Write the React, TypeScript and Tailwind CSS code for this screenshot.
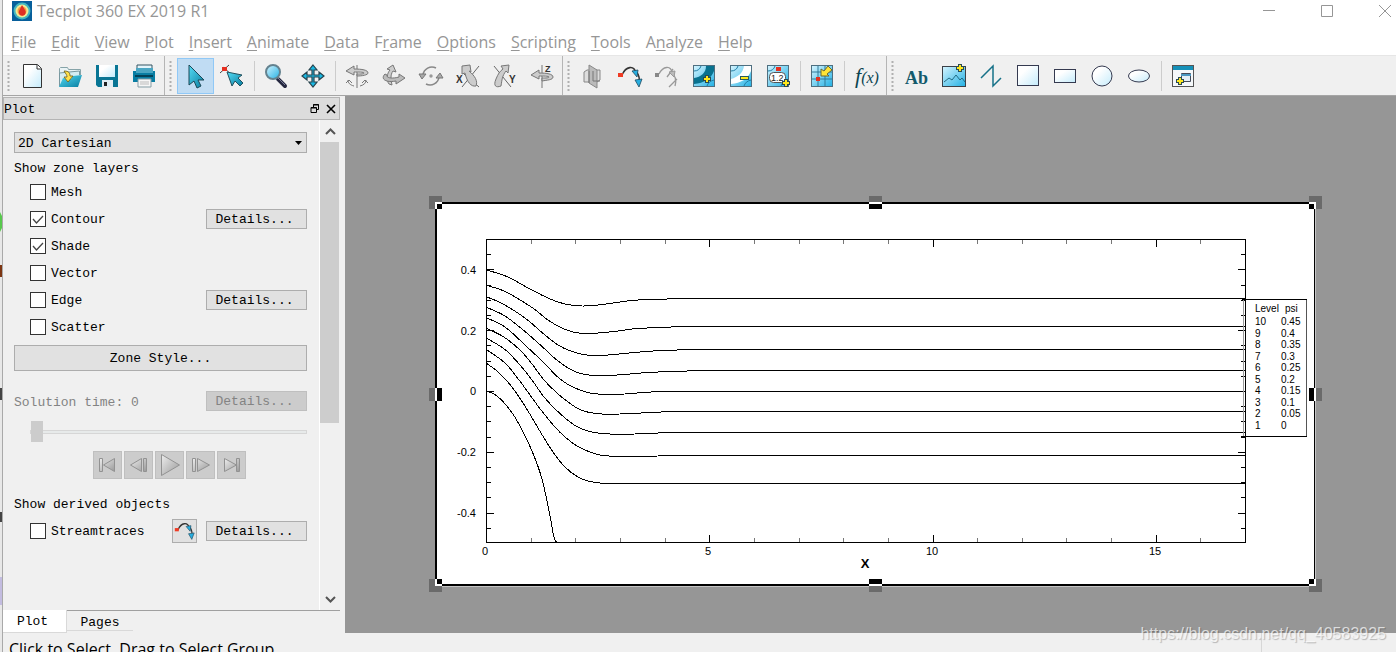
import React, { useState } from 'react';

type IconProps = { children: React.ReactNode };

const Icon = ({ children }: IconProps) => (
  <svg width="26" height="26" viewBox="0 0 26 26" fill="none" aria-hidden="true">
    {children}
  </svg>
);

const MENUS = [
  { name: 'File', key: 0 },
  { name: 'Edit', key: 0 },
  { name: 'View', key: 0 },
  { name: 'Plot', key: 0 },
  { name: 'Insert', key: 0 },
  { name: 'Animate', key: 0 },
  { name: 'Data', key: 0 },
  { name: 'Frame', key: 1 },
  { name: 'Options', key: 0 },
  { name: 'Scripting', key: 0 },
  { name: 'Tools', key: 0 },
  { name: 'Analyze', key: 1 },
  { name: 'Help', key: 0 },
];

const StreamShape = () => (
  <>
    <path d="M5 12C9 3 17 2 19 10" stroke="#333" strokeWidth="1.6" />
    <path d="M19 8C22 12 23 16 22 20" stroke="#333" strokeWidth="1.4" />
    <rect x="1" y="10" width="5" height="4" fill="#ef3b24" />
    <path d="M15 8l6-1-1 7z" fill="#27aee0" stroke="#1f4a60" strokeWidth=".8" />
    <path d="M18 17l7-1-3 8z" fill="#27aee0" stroke="#1f4a60" strokeWidth=".8" />
  </>
);

const Plus = ({ x, y }: { x: number; y: number }) => (
  <path
    d={`M${x + 2} ${y}h3v2h2v3h-2v2h-3v-2h-2v-3h2z`}
    fill="#ffe81c"
    stroke="#2a4a52"
    shapeRendering="crispEdges"
  />
);

const ContourTile = () => (
  <>
    <rect x="2.500" y="2.500" width="21" height="21" fill="url(#sky)" stroke="#4e6f80" />
    <path d="M3 8C7 8 9 6 10 3M16 23c1-3 3-5 7-6" stroke="#1f7ea5" />
  </>
);

const icons: Record<string, React.ReactNode> = {
  'New': (
    <>
      <path d="M3.500 1.500h14l4 4v19h-18z" fill="url(#paper)" stroke="#333" />
      <path d="M17 2v4h4.500" fill="#fff" stroke="#333" />
    </>
  ),
  'Open': (
    <>
      <path d="M2.500 22V5.500l1-1h7l1 2h12V12" fill="#e9f3f5" stroke="#86a3a8" />
      <path d="M2.500 23.500V10l20-2v4" fill="#d5edf2" stroke="#7898a0" />
      <path d="M2 24l4-9 8 1 2-3 9-1-4 12z" fill="url(#sea)" />
      <path d="M7 8c5 0 6 2 6 5h3l-5 6-4-5h3c0-2-1-3-3-6z" fill="#ffe04a" stroke="#695c18" strokeWidth=".8" />
    </>
  ),
  'Save': (
    <>
      <path d="M2 2h22v22H4l-2-2z" fill="#087594" />
      <rect x="5" y="2" width="16" height="12" fill="url(#paper)" />
      <path d="M8 17h11v7H8z" fill="#e2eef4" />
      <rect x="10" y="19" width="3" height="4" fill="#222" />
    </>
  ),
  'Print': (
    <>
      <path d="M6 2h15v9H6z" fill="#e3f4fb" stroke="#345563" />
      <path d="M2 8h22v11H2z" fill="#087da3" />
      <path d="M5 5h17v5H5z" fill="#4aa6c3" />
      <path d="M4 13h18" stroke="#044258" strokeWidth="2" />
      <path d="M7 16h13v8H7z" fill="#f6f6f6" stroke="#859da5" />
      <path d="M9 19h9M9 21h9" stroke="#bbb" />
    </>
  ),
  'Select': <path d="M7 2v20l5-4 3 7 4-2-3-6h6z" fill="url(#sea)" stroke="#1c4857" />,
  'Adjust': (
    <>
      <path d="M1 10l9-8M4 4l10 9" stroke="#444" />
      <rect x="3" y="4" width="5" height="4" fill="#e52f20" />
      <path d="M8 9l5 14 3-5 5 5 3-3-5-5 4-3z" fill="url(#sea)" stroke="#22505d" />
    </>
  ),
  'Zoom': (
    <>
      <path d="M15 16l7 7" stroke="#252840" strokeWidth="4" strokeLinecap="round" />
      <path d="M15 15l7 7" stroke="#777b96" strokeWidth="1" />
      <circle cx="10" cy="9" r="7" fill="url(#sky)" stroke="#64828f" strokeWidth="2" />
    </>
  ),
  'Translate': (
    <path
      d="M13 2l4 5h-3v5h5V9l5 4-5 4v-3h-5v5h3l-4 5-4-5h3v-5H7v3l-5-4 5-4v3h5V7H9z"
      fill="#18b8e3"
      stroke="#28434d"
      strokeWidth="1.200"
    />
  ),
  'Rotate Spherical': (
    <>
      <path d="M13 2v23M4 17c0 3 2 5 6 6M22 17c0 3-2 5-6 6M2 20l3-3 3 3M18 20l3-3 3 3" stroke="#777" />
      <path d="M2 8l8-5v3c8 0 14 1 14 4 0 2-6 3-11 3v-2c4 0 7 0 7-1s-6-1-10-1v3z" fill="#ccc" stroke="#777" />
    </>
  ),
  'Rotate Rollerball': (
    <>
      <path d="M8 21C5 17 6 10 9 7L6 6l6-4 3 7-3-1c-3 4-2 9-1 14z" fill="#ccc" stroke="#777" />
      <path d="M4 11c-5 5 1 9 11 7v3l9-6-6-4v3c-7 2-13 1-12-2z" fill="#bbb" stroke="#777" />
    </>
  ),
  'Rotate Twist': (
    <>
      <path d="M5 12a9 9 0 0 1 13-7M21 14a9 9 0 0 1-13 7" stroke="#888" strokeWidth="1.600" />
      <path d="M1 11h7l-4 5zM25 15h-7l4-5z" fill="#aaa" stroke="#777" />
      <circle cx="13" cy="13" r="1.700" fill="#999" />
    </>
  ),
  'Rotate X': (
    <>
      <path d="M7 24L24 3M9 11l15 13" stroke="#666" />
      <path d="M7 3l8-1 1 7-2-1c6 5 9 10 7 15-5 1-9-4-11-13l-3 1z" fill="#ccc" stroke="#777" />
      <text x="1" y="20" fill="#333" fontSize="10" fontWeight="700" fontFamily="Liberation Sans">X</text>
    </>
  ),
  'Rotate Y': (
    <>
      <path d="M2 3l17 21" stroke="#666" />
      <path d="M9 3l8-1-1 8-2-2c-4 5-4 9-5 15-5 2-8 0-5-7 2-5 4-8 7-10z" fill="#ccc" stroke="#777" />
      <text x="17" y="20" fill="#333" fontSize="10" fontWeight="700" fontFamily="Liberation Sans">Y</text>
    </>
  ),
  'Rotate Z': (
    <>
      <path d="M13 2v23" stroke="#777" />
      <path d="M2 12l8-5v3c8 0 14 1 14 4 0 3-6 3-11 4v-3c4 0 7 0 7-1s-6-1-10-1v3z" fill="#ccc" stroke="#777" />
      <text x="16" y="9" fill="#333" fontSize="9" fontWeight="700" fontFamily="Liberation Sans">Z</text>
    </>
  ),
  'Slice': (
    <>
      <path d="M4 9l3-2h13v10l-3 2H4z" fill="#ddd" stroke="#888" />
      <path d="M9 2l8 5v18l-8-5z" fill="#bbb" stroke="#888" />
      <path d="M9 8v12M13 8v10h7" stroke="#777" />
    </>
  ),
  'Streamtrace': <StreamShape />,
  'Streamtrace Rake': (
    <>
      <path d="M5 11C9 3 17 2 18 10M17 9c4 3 6 7 4 14M15 24l8-8M13 14l6-8" stroke="#999" strokeWidth="1.300" />
      <rect x="1" y="10" width="4" height="4" fill="#888" />
      <path d="M15 9l6-1-1 6z" fill="#bbb" stroke="#999" />
    </>
  ),
  'Add Contour': (
    <>
      <ContourTile />
      <path d="M15 3h8v5C20 16 13 20 3 21v-6C10 14 15 10 15 3z" fill="#08728f" />
      <Plus x={12} y={12} />
    </>
  ),
  'Remove Contour': (
    <>
      <ContourTile />
      <path d="M16 3h7v5C20 16 13 20 3 21v-5C10 14 15 10 16 3z" fill="#fff" />
      <rect x="12.500" y="13.500" width="8" height="3" fill="#ffe81c" stroke="#2a5a60" />
    </>
  ),
  'Contour Label': (
    <>
      <ContourTile />
      <rect x="11" y="4" width="5" height="4" fill="#e53020" />
      <rect x="4.500" y="9.500" width="16" height="10" rx="4" fill="#fff" stroke="#555" />
      <text x="6" y="18" fill="#222" fontSize="9" fontFamily="Liberation Sans">1.2</text>
      <Plus x={17} y={16} />
    </>
  ),
  'Probe': (
    <>
      <rect x="2.500" y="2.500" width="21" height="21" fill="url(#sky)" stroke="#4e6f80" />
      <path d="M9 3v20M16 3v20M3 9h20M3 16h20" stroke="#307b99" />
      <rect x="7" y="14" width="4" height="4" fill="#e53020" />
      <path d="M12 13V6l3 2 4-5 4 4-5 4 2 2z" fill="#ffe435" stroke="#6b6830" />
    </>
  ),
  'Function': (
    <text x="2" y="20" fill="#0b4450" fontSize="22" fontStyle="italic" fontFamily="Liberation Serif">
      f<tspan fontSize="16">(x)</tspan>
    </text>
  ),
  'Text': (
    <text x="1" y="21" fill="#135a6c" fontSize="18" fontWeight="700" fontFamily="Liberation Serif">
      Ab
    </text>
  ),
  'Image': (
    <>
      <rect x="1.500" y="3.500" width="23" height="20" fill="url(#sky)" stroke="#3c4148" />
      <path d="M3 19l5-4 3 2 4-5 4 5 2-2 3 4" stroke="#226b84" />
      <Plus x={15} y={1} />
    </>
  ),
  'Polyline': <path d="M3 15L15 3v20l8-8" stroke="#167188" strokeWidth="1.500" />,
  'Square': <rect x="2.500" y="2.500" width="21" height="20" fill="url(#paper)" stroke="#353a50" />,
  'Rectangle': <rect x="2.500" y="6.500" width="21" height="13" fill="url(#paper)" stroke="#353a50" />,
  'Circle': <circle cx="13" cy="13" r="10" fill="url(#paper)" stroke="#353a50" />,
  'Ellipse': <ellipse cx="13" cy="13" rx="10.500" ry="6" fill="url(#paper)" stroke="#353a50" />,
  'Frame': (
    <>
      <rect x="2.500" y="2.500" width="21" height="21" fill="#f5f8fa" stroke="#555" />
      <path d="M3 3h20v4H3z" fill="#1590b8" />
      <path d="M11.500 10.500h9v8h-9z" fill="#e3eef5" stroke="#454a58" />
      <path d="M11 11h10v2H11z" fill="#4a97c0" />
      <Plus x={6} y={14} />
    </>
  ),
};

// '|' is a thin separator inside a toolbar
const TOOLBARS = [
  ['New', 'Open', 'Save', 'Print'],
  ['Select', 'Adjust', '|', 'Zoom', 'Translate', '|', 'Rotate Spherical', 'Rotate Rollerball', 'Rotate Twist', 'Rotate X', 'Rotate Y', 'Rotate Z'],
  ['Slice', 'Streamtrace', 'Streamtrace Rake', 'Add Contour', 'Remove Contour', 'Contour Label', '|', 'Probe', '|', 'Function'],
  ['Text', 'Image', 'Polyline', 'Square', 'Rectangle', 'Circle', 'Ellipse', '|', 'Frame'],
];

const LAYERS = [
  { name: 'Mesh', on: false, details: false },
  { name: 'Contour', on: true, details: true },
  { name: 'Shade', on: true, details: false },
  { name: 'Vector', on: false, details: false },
  { name: 'Edge', on: false, details: true },
  { name: 'Scatter', on: false, details: false },
];

const PLAYER = [
  { name: 'First frame', d: 'M1.500 3.500h3v13h-3zM16.500 3.500v13l-11-6.500z' },
  { name: 'Step back', d: 'M12.500 3.500v13l-11-6.500zM14.500 3.500h3v13h-3z' },
  { name: 'Play', d: 'M1.500 -.500v21l18-10.500z' },
  { name: 'Step forward', d: 'M1.500 3.500h3v13h-3zM6.500 3.500v13l12-6.500z' },
  { name: 'Last frame', d: 'M2.500 3.500v13l12-6.500zM14.500 3.500h3v13h-3z' },
];

const LEVELS = [
  ['10', '0.45'],
  ['9', '0.4'],
  ['8', '0.35'],
  ['7', '0.3'],
  ['6', '0.25'],
  ['5', '0.2'],
  ['4', '0.15'],
  ['3', '0.1'],
  ['2', '0.05'],
  ['1', '0'],
];

// Contour lines in plot units; the last point runs out to the right axis
const CONTOURS: number[][][] = [
  [[487, 270], [508, 277], [528, 288], [550, 299], [565, 304], [582, 306], [598, 305], [620, 302], [638, 300], [685, 298.5], [1245, 298.5]],
  [[487, 285.5], [505, 291.5], [532, 307.5], [548, 320], [565, 329.5], [582, 333.5], [598, 333], [618, 331], [638, 328.5], [685, 326.5], [1245, 326.5]],
  [[487, 297], [503, 304], [525, 318], [542, 332.5], [558, 345], [572, 351.5], [587, 355], [608, 355], [632, 352.7], [658, 350.7], [695, 349.5], [1245, 349.5]],
  [[487, 307.5], [505, 316], [525, 331.5], [542, 346.5], [558, 361], [575, 371.5], [592, 375.3], [617, 375], [645, 372.7], [665, 371.7], [705, 370.5], [1245, 370.5]],
  [[487, 318], [505, 327], [525, 345], [542, 361], [560, 379], [575, 388], [594, 393.7], [625, 394], [645, 392.3], [668, 391.5], [1245, 391.5]],
  [[487, 328.7], [503, 336.5], [520, 350], [532, 364], [544, 380], [557, 393], [568, 402], [581, 410], [597, 413.7], [620, 414], [650, 412.5], [673, 411.5], [1245, 411.5]],
  [[487, 338.5], [505, 349.5], [520, 365], [532, 380], [544, 397], [558, 411.7], [575, 425.5], [592, 432], [610, 434], [635, 434], [668, 432.5], [1245, 432.5]],
  [[487, 350], [505, 363], [519, 380], [530, 395], [541, 410], [555, 427], [565, 437], [577, 446], [590, 452], [604, 455.7], [630, 456.3], [658, 456], [661, 455.5], [1245, 455.5]],
  [[487, 363.7], [497, 371], [506, 380], [515, 391], [528, 411], [541, 433], [553, 452], [565, 467], [578, 477], [590, 481.5], [604, 483.5], [1245, 483.5]],
  [[487, 391], [497, 396], [510, 410], [520, 426], [532, 451], [542, 479], [550, 516], [553, 533], [555, 540], [557, 542.5]],
];

const smooth = (pts: number[][]) => {
  let d = `M${pts[0][0]} ${pts[0][1]}`;
  for (let i = 0; i < pts.length - 1; i++) {
    const [x1, y1] = pts[i];
    const [x2, y2] = pts[i + 1];
    if (x2 === 1245) {
      d += `H${x2}`;
      continue;
    }
    const [x0, y0] = pts[i - 1] ?? pts[i];
    // the long flat tail must not bend the segment before it
    const [x3, y3] = pts[i + 2] && pts[i + 2][0] !== 1245 ? pts[i + 2] : pts[i + 1];
    d += `C${x1 + (x2 - x0) / 6} ${y1 + (y2 - y0) / 6} ${x2 - (x3 - x1) / 6} ${y2 - (y3 - y1) / 6} ${x2} ${y2}`;
  }
  return d;
};

const range = (from: number, to: number) => Array.from({ length: to - from + 1 }, (_, i) => from + i);

const Corner = ({ x, y, right, bottom }: { x: number; y: number; right?: boolean; bottom?: boolean }) => (
  <g>
    <rect x={x} y={y} width="13" height="13" fill="#6a6a6a" />
    <rect x={right ? x : x + 6} y={bottom ? y : y + 6} width="7" height="7" fill="#fff" />
    <rect x={right ? x : x + 8} y={bottom ? y : y + 8} width="5" height="5" fill="#000" />
  </g>
);

function PlotFrame() {
  return (
    <svg viewBox="429 196 893 396" className="block w-full" role="img" aria-label="psi contour plot">
      <g shapeRendering="crispEdges">
        <rect x="436" y="203" width="880" height="384" fill="#c4c4c4" />
        <rect x="435" y="202" width="880" height="384" fill="#000" />
        <rect x="437" y="204" width="877" height="380" fill="#fff" />
        <rect x="486.500" y="239.500" width="759" height="303" fill="none" stroke="#000" />
        {range(1, 16).map(i => {
          const x = Math.round(486 + i * 44.65) + 0.5;
          const len = i % 5 === 0 ? 7 : 4;
          return (
            <path key={i} d={`M${x} 240v${len}M${x} 542v-${len}`} stroke={i % 5 === 0 ? '#000' : '#777'} />
          );
        })}
        {range(-9, 9).map(i => {
          const y = Math.round(391 - i * 15.2) + 0.5;
          const len = i % 4 === 0 ? 7 : 4;
          return <path key={i} d={`M487 ${y}h${len}M1245 ${y}h-${len}`} stroke="#000" />;
        })}
        {CONTOURS.map((pts, i) => (
          <path key={i} d={smooth(pts)} fill="none" stroke="#000" />
        ))}
        <path d="M1245.500 299.500h61v137h-61" fill="#fff" />
        <path d="M1242 299.500h64.500M1241 436.500h66" stroke="#000" />
        <path d="M1306.500 436V300" stroke="#555" />
        <path d="M1243.500 300v136" stroke="#999" />
        <path d="M1245.500 240v302" stroke="#000" />
        <Corner x={429} y={196} />
        <Corner x={1309} y={196} right />
        <Corner x={429} y={579} bottom />
        <Corner x={1309} y={579} right bottom />
        <path d="M869 196h13v6h-13zM869 586h13v6h-13zM429 388h6v13h-6zM1316 388h6v13h-6z" fill="#6a6a6a" />
        <path d="M869 202h13v2h-13zM869 584h13v2h-13zM435 388h2v13h-2zM1314 388h2v13h-2z" fill="#fff" />
        <path d="M869 204h13v5h-13zM869 579h13v5h-13zM437 388h5v13h-5zM1309 388h5v13h-5z" fill="#000" />
      </g>
      <g fontFamily="Liberation Sans, Arial, sans-serif" fontSize="11" fill="#000">
        {['0.4', '0.2', '0', '-0.2', '-0.4'].map((t, i) => (
          <text key={t} x="476" y={274 + Math.round(i * 60.7)} textAnchor="end">{t}</text>
        ))}
        {['0', '5', '10', '15'].map((t, i) => (
          <text key={t} x={Math.round(485 + i * 223.3)} y="555" textAnchor="middle">{t}</text>
        ))}
        <text x="865" y="568" textAnchor="middle" fontSize="13" fontWeight="700">X</text>
        <g fontSize="10">
          <text x="1255" y="312">Level</text>
          <text x="1285" y="312">psi</text>
          {LEVELS.map(([level, psi], i) => (
            <React.Fragment key={level}>
              <text x="1255" y={Math.round(325 + i * 11.5)}>{level}</text>
              <text x="1281" y={Math.round(325 + i * 11.5)}>{psi}</text>
            </React.Fragment>
          ))}
        </g>
      </g>
    </svg>
  );
}

const DetailsButton = ({ disabled = false }: { disabled?: boolean }) => (
  <button
    type="button"
    disabled={disabled}
    className="h-5 w-[101px] border border-[#adadad] bg-[#e1e1e1] pr-1 pt-px leading-[18px] disabled:border-[#bfbfbf] disabled:bg-[#cccccc] disabled:text-[#838383]"
  >
    Details...
  </button>
);

const LayerCheck = ({ name, on }: { name: string; on: boolean }) => {
  const [checked, setChecked] = useState(on);
  return (
    <label className="flex items-center gap-[5px]">
      <span className="grid">
        <input
          type="checkbox"
          checked={checked}
          onChange={e => setChecked(e.target.checked)}
          className="col-start-1 row-start-1 h-4 w-4 appearance-none border border-[#333] bg-white"
        />
        {checked && (
          <svg className="pointer-events-none col-start-1 row-start-1 h-4 w-4" viewBox="0 0 16 16" fill="none">
            <path d="M3 8l3.500 4L13 5" stroke="#444" strokeWidth="1.300" />
          </svg>
        )}
      </span>
      <span className="pt-0.5">{name}</span>
    </label>
  );
};

function PlotSidebar() {
  return (
    <aside className="flex w-[342px] shrink-0 flex-col pr-[5px] pt-px font-['Liberation_Mono','Noto_Sans_CJK_SC',monospace] text-[13px] text-black">
      <div className="flex h-[23px] shrink-0 items-center border border-[#b4b4b4] bg-[#dcdcdc]">
        <h2 className="flex-1 pt-0.5">Plot</h2>
        <button type="button" aria-label="Float" className="flex h-4 w-4 items-center justify-center">
          <svg width="10" height="10" viewBox="0 0 10 10" fill="none" stroke="#000">
            <path d="M3.500 3V.500h5v5H7M3 1h6M1 4h5.500" />
            <path d="M1 3.500h5.500v5H1z" />
          </svg>
        </button>
        <button type="button" aria-label="Close panel" className="flex h-4 w-4 items-center justify-center">
          <svg width="10" height="10" viewBox="0 0 10 10" stroke="#000" strokeWidth="1.600">
            <path d="M1 1l8 8M9 1L1 9" />
          </svg>
        </button>
      </div>

      <div className="flex min-h-0 flex-1">
        <div className="min-w-0 flex-1 overflow-hidden pl-[11px] pr-3 pt-3">
          <div className="grid items-center">
            <select
              aria-label="Plot type"
              className="col-start-1 row-start-1 h-[21px] w-full appearance-none border border-[#adadad] bg-[#e1e1e1] pl-[3px] pt-0.5 leading-[17px]"
            >
              <option>2D Cartesian</option>
              <option>3D Cartesian</option>
              <option>XY Line</option>
            </select>
            <svg className="pointer-events-none col-start-1 row-start-1 mr-[5px] justify-self-end" width="7" height="4" viewBox="0 0 7 4">
              <path d="M0 0h7L3.500 4z" />
            </svg>
          </div>

          <h3 className="mt-1 h-[21px] leading-6">Show zone layers</h3>
          {LAYERS.map(layer => (
            <div key={layer.name} className="flex h-[27px] items-center justify-between pl-4">
              <LayerCheck name={layer.name} on={layer.on} />
              {layer.details && <DetailsButton />}
            </div>
          ))}
          <button type="button" className="mt-[5px] h-[26px] w-full border border-[#adadad] bg-[#e1e1e1] pt-px">
            Zone Style...
          </button>

          <div className="mt-5 flex h-5 items-center justify-between text-[#838383]">
            <span className="pt-1">Solution time: 0</span>
            <DetailsButton disabled />
          </div>
          <div className="mt-2.5 flex h-[21px] pl-4">
            <input
              type="range"
              aria-label="Solution time"
              defaultValue={0}
              disabled
              className="w-full appearance-none bg-transparent [&::-webkit-slider-runnable-track]:h-1 [&::-webkit-slider-runnable-track]:border [&::-webkit-slider-runnable-track]:border-[#d6d6d6] [&::-webkit-slider-runnable-track]:bg-[#e7eaea] [&::-webkit-slider-thumb]:-mt-2.5 [&::-webkit-slider-thumb]:h-[21px] [&::-webkit-slider-thumb]:w-3 [&::-webkit-slider-thumb]:appearance-none [&::-webkit-slider-thumb]:bg-[#cccccc]"
            />
          </div>
          <div className="mt-[9px] flex justify-center gap-0.5 pl-[18px]">
            {PLAYER.map(p => (
              <button
                key={p.name}
                type="button"
                disabled
                aria-label={p.name}
                className="flex h-7 w-[29px] items-center justify-center border border-[#bfbfbf] bg-[#cccccc]"
              >
                <svg width="20" height="22" viewBox="0 -1 20 22">
                  <path d={p.d} fill="url(#steel)" stroke="#929292" />
                </svg>
              </button>
            ))}
          </div>

          <h3 className="mt-[15px] h-[21px] leading-[22px]">Show derived objects</h3>
          <div className="mt-0.5 flex h-[27px] items-center pl-4">
            <LayerCheck name="Streamtraces" on={false} />
            <button
              type="button"
              aria-label="Place streamtrace"
              className="ml-auto mr-[9px] flex h-6 w-[25px] items-center justify-center border border-[#adadad] bg-[#e1e1e1]"
            >
              <svg width="21" height="21" viewBox="0 0 26 26" fill="none">
                <StreamShape />
              </svg>
            </button>
            <DetailsButton />
          </div>
        </div>

        <div className="flex w-[21px] shrink-0 flex-col border-l border-white">
          <div className="flex h-[22px] items-center justify-center">
            <svg width="11" height="7" viewBox="0 0 11 7" fill="none">
              <path d="M1 6l4.500-4.500L10 6" stroke="#555" strokeWidth="2" />
            </svg>
          </div>
          <div className="min-h-0 flex-1">
            <div className="mr-px h-[63%] bg-[#cdcdcd]" />
          </div>
          <div className="flex h-[22px] items-center justify-center">
            <svg width="11" height="7" viewBox="0 0 11 7" fill="none">
              <path d="M1 1l4.500 4.500L10 1" stroke="#555" strokeWidth="2" />
            </svg>
          </div>
        </div>
      </div>

      <div className="flex h-[23px] shrink-0 items-start" role="tablist">
        <button type="button" role="tab" aria-selected="true" className="h-[23px] w-16 border-b border-r border-[#d9d9d9] bg-white pr-1 pt-0.5">
          Plot
        </button>
        <div className="flex-1 border-t border-[#a0a0a0]">
          <button type="button" role="tab" aria-selected="false" className="h-5 w-[66px] border-b border-[#d9d9d9] pt-0.5">
            Pages
          </button>
        </div>
      </div>
    </aside>
  );
}

export default function App() {
  const [tool, setTool] = useState('Select');

  return (
    <div className="relative flex h-screen overflow-hidden bg-[#f0f0f0]">
      <svg width="0" height="0" className="absolute" aria-hidden="true">
        <defs>
          <linearGradient id="sky" x1="0" y1="0" x2="1" y2="1">
            <stop stopColor="#d5f4ff" />
            <stop offset="1" stopColor="#23b1e4" />
          </linearGradient>
          <linearGradient id="sea" x1="0" y1="0" x2="1" y2="1">
            <stop stopColor="#55dcf5" />
            <stop offset="1" stopColor="#087da0" />
          </linearGradient>
          <linearGradient id="paper" x1="0" y1="0" x2="1" y2="1">
            <stop offset=".3" stopColor="#fff" />
            <stop offset="1" stopColor="#c4ebfb" />
          </linearGradient>
          <linearGradient id="steel" x1="0" y1="0" x2="1" y2="1">
            <stop stopColor="#eee" />
            <stop offset="1" stopColor="#999" />
          </linearGradient>
        </defs>
      </svg>

      {/* edge of the window behind */}
      <div className="w-[3px] shrink-0 border-r border-[#a9a9a9] bg-[#e8e8e8]">
        <svg width="2" height="652" viewBox="0 0 2 652">
          <path d="M0 212l2 4v12l-2 4z" fill="#58c84d" />
          <path d="M0 265h2v12H0z" fill="#7c3512" />
          <path d="M0 388h2v12H0zM0 512h2v10H0z" fill="#444" />
          <path d="M0 577h2v28H0z" fill="#c3bce0" />
        </svg>
      </div>

      <div className="flex min-w-0 flex-1 flex-col">
        <header className="shrink-0 bg-white font-['Open_Sans','Noto_Sans',sans-serif] text-base text-[#969696]">
          <div className="flex h-6 items-center pb-0.5 pl-[9px]">
            <svg width="20" height="20" viewBox="0 0 20 20">
              <rect width="20" height="20" fill="#075f9b" />
              <circle cx="10" cy="10" r="8.500" fill="#43b8c0" />
              <circle cx="10" cy="10" r="6.500" fill="#f4e995" />
              <circle cx="10" cy="10" r="4.500" fill="#f69b3e" />
              <path d="M10 4l3 5a3.500 3.500 0 1 1-6 1z" fill="#de2f24" />
            </svg>
            <h1 className="ml-[5px] flex-1">Tecplot 360 EX 2019 R1</h1>
            <div className="flex items-center gap-[46px]">
              <button type="button" aria-label="Minimize">
                <svg width="12" height="12" viewBox="0 0 12 12" stroke="#969696"><path d="M0 5.500h12" /></svg>
              </button>
              <button type="button" aria-label="Maximize">
                <svg width="12" height="12" viewBox="0 0 12 12" fill="none" stroke="#969696"><path d="M.500.500h11v11H.500z" /></svg>
              </button>
              <button type="button" aria-label="Close" className="mr-[5px]">
                <svg width="12" height="12" viewBox="0 0 12 12" stroke="#969696"><path d="M0 0l12 12M12 0L0 12" /></svg>
              </button>
            </div>
          </div>
          <nav className="flex h-[31px] items-center gap-[15px] pl-2 pt-1">
            {MENUS.map(({ name, key }) => (
              <button key={name} type="button" className="leading-6">
                {name.slice(0, key)}
                <span className="underline underline-offset-2">{name[key]}</span>
                {name.slice(key + 1)}
              </button>
            ))}
          </nav>
        </header>

        <div className="flex h-[41px] shrink-0 items-stretch border-b border-t border-b-[#a5a5a5] border-t-[#e6e6e6]">
          {TOOLBARS.map((bar, i) => (
            <div
              key={i}
              role="toolbar"
              className={`flex items-center pr-px ${i < 3 ? 'border-r border-[#b5b5b5]' : ''}`}
            >
              <svg width="12" height="32" viewBox="0 0 12 32" aria-hidden="true">
                <path d="M5.500 1v30" stroke="#b0b0b0" strokeWidth="2" strokeDasharray="2 2" />
              </svg>
              {bar.map((name, j) =>
                name === '|' ? (
                  <div key={j} className="flex w-[7px] justify-center">
                    <div className="h-[30px] w-px bg-[#cccccc]" />
                  </div>
                ) : (
                  <button
                    key={name}
                    type="button"
                    aria-label={name}
                    onClick={() => setTool(name)}
                    className={`flex h-9 w-[37px] items-center justify-center border pr-px ${
                      tool === name ? 'border-[#90c8f6] bg-[#c0dcf3]' : 'border-transparent'
                    }`}
                  >
                    <Icon>{icons[name]}</Icon>
                  </button>
                )
              )}
            </div>
          ))}
        </div>

        <div className="flex min-h-0 flex-1">
          <PlotSidebar />
          <main className="min-w-0 flex-1 overflow-hidden bg-[#969696] pl-[84px] pr-[74px] pt-[100px]">
            <PlotFrame />
          </main>
        </div>

        <footer className="flex h-[19px] shrink-0 overflow-hidden pl-1.5 pt-1 font-['Open_Sans','Noto_Sans',sans-serif] text-base leading-6 text-black">
          <span className="flex-1">Click to Select, Drag to Select Group</span>
          <div className="-mt-1 w-[135px] border-l border-[#d7d7d7]" />
        </footer>
      </div>

      <div className="pointer-events-none absolute bottom-1.5 right-2.5 font-['Liberation_Sans',Arial,sans-serif] text-base leading-6 text-white/70 [text-shadow:1px_1px_1px_rgba(0,0,0,0.25)]">
        https://blog.csdn.net/qq_40583925
      </div>
    </div>
  );
}
